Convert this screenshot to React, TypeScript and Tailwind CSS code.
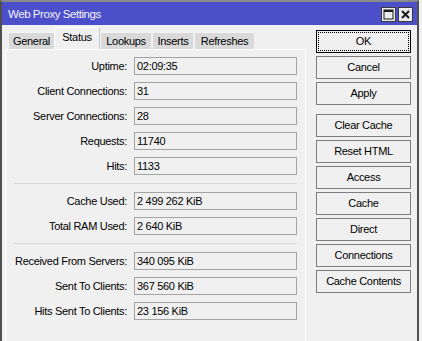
import React from "react";

const font = { fontFamily: '"Liberation Sans", Arial, sans-serif' };

type Row = { label: string; value: string };

const group1: Row[] = [
  { label: "Uptime:", value: "02:09:35" },
  { label: "Client Connections:", value: "31" },
  { label: "Server Connections:", value: "28" },
  { label: "Requests:", value: "11740" },
  { label: "Hits:", value: "1133" },
];
const group2: Row[] = [
  { label: "Cache Used:", value: "2 499 262 KiB" },
  { label: "Total RAM Used:", value: "2 640 KiB" },
];
const group3: Row[] = [
  { label: "Received From Servers:", value: "340 095 KiB" },
  { label: "Sent To Clients:", value: "367 560 KiB" },
  { label: "Hits Sent To Clients:", value: "23 156 KiB" },
];

function Field({ label, value }: Row) {
  return (
    <div className="flex items-center h-[18px]">
      <div className="w-[122px] text-right pr-px">{label}</div>
      <div className="ml-[6px] w-[163px] h-[18px] border border-[#a3a3a3] pl-[2px] flex items-center text-black">
        {value}
      </div>
    </div>
  );
}

function Group({ rows }: { rows: Row[] }) {
  return (
    <div className="flex flex-col gap-[7px]">
      {rows.map((r) => (
        <Field key={r.label} {...r} />
      ))}
    </div>
  );
}

function Sep() {
  return <div className="ml-[8px] w-[283px] h-px bg-[#d6d6d6] my-[8px]" />;
}

function Btn({ children, focused, className = "" }: { children: React.ReactNode; focused?: boolean; className?: string }) {
  if (focused) {
    return (
      <div className={"w-[95px] h-[23px] border border-black p-px flex " + className}>
        <div className="flex-1 border border-dotted border-black flex items-center justify-center">{children}</div>
      </div>
    );
  }
  return (
    <div className={"w-[95px] h-[23px] border border-[#7d7d7d] flex items-center justify-center " + className}>
      {children}
    </div>
  );
}

export default function App() {
  return (
    <div className="w-[422px] h-[341px] overflow-hidden bg-[#f0f0f0] text-[11px] tracking-[-0.3px] text-black" style={font}>
      <div className="w-[419px] h-[341px] border-x-2 border-t-2 border-l-[#505050] border-r-[#505050] border-t-[#8a8a8a] flex flex-col bg-[#f0f0f0]">
        {/* Title bar */}
        <div className="h-[23px] bg-[#4b4fc9] flex items-start justify-between">
          <div className="pl-[6px] pt-[5px] text-[11.5px] text-[#f4f4ff] leading-[14px] tracking-[-0.45px]">Web Proxy Settings</div>
          <div className="flex gap-[2px] pt-[5px] pr-[4px]">
            <div className="w-[15px] h-[15px] bg-[#ececec] border border-[#3a3a3a] flex items-center justify-center">
              <svg width="11" height="11" viewBox="0 0 11 11">
                <rect x="1" y="1" width="9" height="9" fill="none" stroke="#1a1a1a" strokeWidth="1" />
                <rect x="1" y="1" width="9" height="2" fill="#1a1a1a" />
              </svg>
            </div>
            <div className="w-[15px] h-[15px] bg-[#ececec] border border-[#3a3a3a] flex items-center justify-center">
              <svg width="11" height="11" viewBox="0 0 11 11">
                <path d="M2 2 L9 9 M9 2 L2 9" stroke="#1a1a1a" strokeWidth="2" />
              </svg>
            </div>
          </div>
        </div>
        {/* Body */}
        <div className="flex flex-1">
          {/* Left: tabs + panel */}
          <div className="pl-[3px] pt-[2px] flex flex-col">
            <div className="flex items-end h-[22px]">
              <div className="ml-[3px] w-[46px] h-[17px] bg-[#d9d9d9] border-t border-l border-[#f4f4f4] flex items-center justify-center">General</div>
              <div className="w-[46px] h-[22px] bg-[#f0f0f0] border-t border-l border-white border-r border-r-[#c8c8c8] flex items-center justify-center pb-[2px]">Status</div>
              <div className="w-[51px] h-[17px] bg-[#d9d9d9] border-t border-l border-[#f4f4f4] flex items-center justify-center">Lookups</div>
              <div className="ml-px w-[41px] h-[17px] bg-[#d9d9d9] border-t border-l border-[#f4f4f4] flex items-center justify-center">Inserts</div>
              <div className="ml-px w-[60px] h-[17px] bg-[#d9d9d9] border-t border-l border-[#f4f4f4] flex items-center justify-center">Refreshes</div>
            </div>
            <div className="w-[301px] flex-1 border-t border-l border-r border-white pt-[7px]">
              <Group rows={group1} />
              <div className="mt-[1px]" />
              <Sep />
              <Group rows={group2} />
              <Sep />
              <Group rows={group3} />
            </div>
          </div>
          {/* Right: buttons */}
          <div className="ml-[10px] pt-[5px] flex flex-col gap-[3px]">
            <Btn focused>OK</Btn>
            <Btn>Cancel</Btn>
            <Btn>Apply</Btn>
            <Btn className="mt-[6px]">Clear Cache</Btn>
            <Btn>Reset HTML</Btn>
            <Btn>Access</Btn>
            <Btn>Cache</Btn>
            <Btn>Direct</Btn>
            <Btn>Connections</Btn>
            <Btn>Cache Contents</Btn>
          </div>
        </div>
      </div>
    </div>
  );
}
